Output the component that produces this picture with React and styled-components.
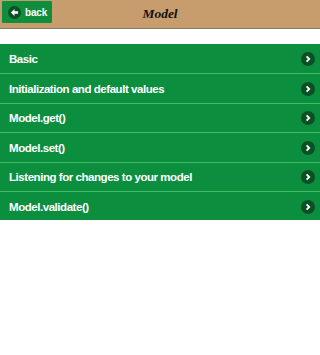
import React from "react";
import styled, { createGlobalStyle } from "styled-components";

const Global = createGlobalStyle`
  html, body { margin: 0; padding: 0; background: #fff; }
  body { font-family: "Liberation Sans", Arial, sans-serif; }
`;

const Page = styled.div`
  width: 320px;
  min-height: 355px;
  background: #fff;
`;

const Header = styled.header`
  height: 28px;
  background: #c89d6d;
  border-bottom: 1px solid #8c7b6b;
  display: flex;
  align-items: center;
  position: relative;
  justify-content: center;
`;

const BackButton = styled.button`
  position: absolute;
  left: 2px;
  top: 1px;
  width: 50px;
  height: 22px;
  background: #0f8e3e;
  border: none;
  border-radius: 1px;
  display: flex;
  align-items: center;
  gap: 4px;
  padding: 0 0 0 6px;
  color: #fff;
  font: bold 10px "Liberation Sans", Arial, sans-serif;
  letter-spacing: -0.2px;
  cursor: pointer;
`;

const IconCircle = styled.span`
  width: ${(p) => p.$size}px;
  height: ${(p) => p.$size}px;
  border-radius: 50%;
  background: #0b5025;
  display: flex;
  align-items: center;
  justify-content: center;
  flex-shrink: 0;
`;

const Title = styled.h1`
  margin: 0;
  font: italic bold 13.5px "Liberation Serif", "Times New Roman", serif;
  color: #111;
`;

const List = styled.ul`
  list-style: none;
  margin: 15px 0 0;
  padding: 0;
`;

const Row = styled.li`
  height: 29.4px;
  background: #0c8e3f;
  border-top: ${(p) => (p.$first ? "none" : "1px solid #3fbf62")};
  display: flex;
  align-items: center;
  justify-content: space-between;
  padding: 1px 5px 0 9px;
  box-sizing: border-box;
  color: #fff;
  font: bold 11.5px "Liberation Sans", Arial, sans-serif;
  letter-spacing: -0.45px;
`;

const items = [
  "Basic",
  "Initialization and default values",
  "Model.get()",
  "Model.set()",
  "Listening for changes to your model",
  "Model.validate()",
];

export default function App() {
  return (
    <Page>
      <Global />
      <Header>
        <BackButton>
          <IconCircle $size={13}>
            <svg width="9" height="9" viewBox="0 0 10 10">
              <path d="M1 5 L5 1.2 V3.6 H9 V6.4 H5 V8.8 Z" fill="#fff" />
            </svg>
          </IconCircle>
          back
        </BackButton>
        <Title>Model</Title>
      </Header>
      <List>
        {items.map((t, i) => (
          <Row key={t} $first={i === 0}>
            <span>{t}</span>
            <IconCircle $size={14}>
              <svg width="8" height="8" viewBox="0 0 8 8">
                <path d="M2.6 1.4 L5.2 4 L2.6 6.6" fill="none" stroke="#fff" strokeWidth="1.8" />
              </svg>
            </IconCircle>
          </Row>
        ))}
      </List>
    </Page>
  );
}
